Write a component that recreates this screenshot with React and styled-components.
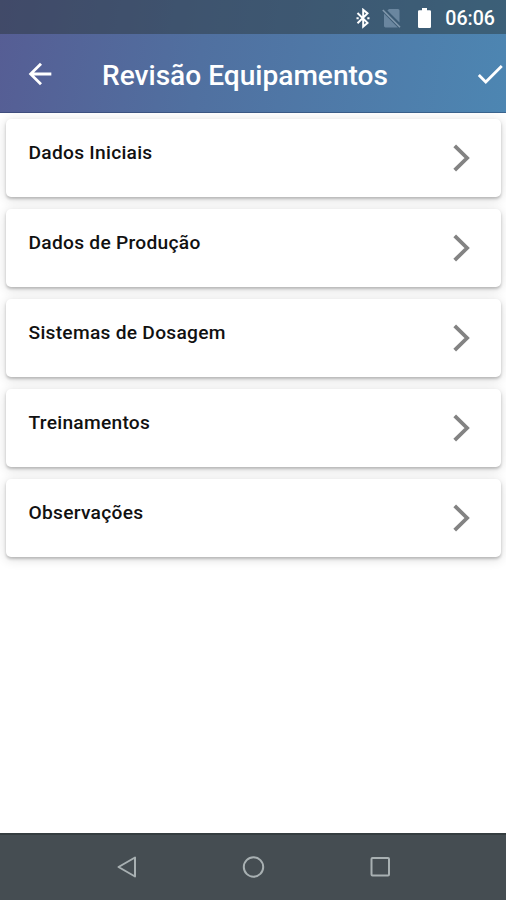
import styled, { createGlobalStyle } from "styled-components";

const GlobalStyle = createGlobalStyle`
  body {
    margin: 0;
    background: #fff;
    font-family: Roboto, "Liberation Sans", sans-serif;
  }
`;
const Screen = styled.div`
  display: flex;
  flex-direction: column;
  height: 900px;
  overflow: hidden;
`;
const Header = styled.header`
  background: linear-gradient(100deg, #565d94 0%, #5070a0 40%, #4d86b2 100%);
`;
const StatusBar = styled.div`
  box-sizing: border-box;
  display: flex;
  justify-content: flex-end;
  align-items: center;
  height: 34px;
  padding: 2px 11px 0 0;
  background: rgba(40, 50, 50, 0.45);
`;
const Clock = styled.span`
  margin: 2px 0 0 14px;
  font-size: 19.6px;
  font-weight: 500;
  line-height: 30px;
  color: #fff;
`;
const StatusIcon = styled.svg`
  display: block;
  width: ${(props) => props.$width}px;
  height: 21px;
  margin-left: ${(props) => props.$gap || 0}px;
`;
const AppBar = styled.div`
  box-sizing: border-box;
  display: flex;
  align-items: center;
  height: 79px;
  padding: 1px 0 0 23px;
  border-bottom: 1px solid rgba(30, 50, 90, 0.4);
`;
const Title = styled.h1`
  flex: 1;
  margin: 4px 0 0 45px;
  font-size: 28.1px;
  font-weight: 500;
  line-height: 34px;
  white-space: nowrap;
  color: #fff;
`;
const Action = styled.svg`
  display: block;
  flex: none;
  width: 34px;
  height: 34px;
  margin-right: ${(props) => props.$end || 0}px;
  fill: #fff;
`;
const List = styled.main`
  flex: 1;
  display: flex;
  flex-direction: column;
  gap: 12px;
  padding: 6px 5px 0 6px;
`;
const Card = styled.div`
  box-sizing: border-box;
  display: flex;
  justify-content: space-between;
  height: 78px;
  padding: 0 13px 0 22.5px;
  border-radius: 5px;
  background: #fff;
  box-shadow: 0 2px 3px rgba(0, 0, 0, 0.22), 0 2px 11px 1px rgba(0, 0, 0, 0.12);
`;
const Label = styled.span`
  margin-top: 22px;
  font-size: 19.2px;
  font-weight: 500;
  letter-spacing: 0.27px;
  line-height: 24px;
  color: #111;
`;
const Chevron = styled.svg`
  display: block;
  width: 54px;
  height: 54px;
  margin-top: 12px;
  fill: none;
  stroke: #838383;
  stroke-width: 1.7;
`;
const NavBar = styled.nav`
  box-sizing: border-box;
  display: flex;
  justify-content: center;
  gap: 102.5px;
  height: 67px;
  padding-top: 20px;
  border-top: 2px solid #353d40;
  background: #454d52;
`;
const NavIcon = styled.svg`
  display: block;
  width: 24px;
  height: 24px;
  fill: none;
  stroke: #a8b0b2;
  stroke-width: 2;
  stroke-linejoin: round;
`;

const items = [
  "Dados Iniciais",
  "Dados de Produção",
  "Sistemas de Dosagem",
  "Treinamentos",
  "Observações",
];

const App = () => {
  return (
    <>
      <GlobalStyle />
      <Screen>
        <Header>
          <StatusBar>
            <StatusIcon $width={14} viewBox="0 0 14 21">
              <path
                d="M1.5 5L11.5 14.9L7.2 18.5V1.8L11.5 5.4L1.5 15.3"
                fill="none"
                stroke="#fff"
                strokeWidth="2"
              />
              <path d="M0.5 10.2h2.2M11.3 10.2h2.2" stroke="#fff" strokeWidth="2" />
            </StatusIcon>
            <StatusIcon $width={20} $gap={12} viewBox="0 0 20 21">
              <path
                d="M7 1h9a1.5 1.5 0 0 1 1.5 1.5V14.6L5.4 2.6zM2 5.4L15.8 19.4H3.5A1.5 1.5 0 0 1 2 18z"
                fill="#6a869f"
              />
              <path d="M0.8 2L18 19.3" stroke="#8299ad" strokeWidth="1.6" />
            </StatusIcon>
            <StatusIcon $width={13} $gap={16} viewBox="0 0 13 21">
              <path
                d="M4 0h5v2.2h2.8A1.2 1.2 0 0 1 13 3.4v15.4a1.2 1.2 0 0 1-1.2 1.2H1.2A1.2 1.2 0 0 1 0 18.8V3.4a1.2 1.2 0 0 1 1.2-1.2H4z"
                fill="#fff"
              />
            </StatusIcon>
            <Clock>06:06</Clock>
          </StatusBar>
          <AppBar>
            <Action viewBox="0 0 24 24">
              <path d="M20 11H7.83l5.59-5.59L12 4l-8 8 8 8 1.41-1.41L7.83 13H20v-2z" />
            </Action>
            <Title>Revisão Equipamentos</Title>
            <Action $end={-1} viewBox="0 0 24 24">
              <path d="M9 16.17L4.83 12l-1.42 1.41L9 19 21 7l-1.41-1.41z" />
            </Action>
          </AppBar>
        </Header>
        <List>
          {items.map((item) => (
            <Card key={item}>
              <Label>{item}</Label>
              <Chevron viewBox="0 0 24 24">
                <path d="M9.2 6.6L14.7 12L9.2 17.4" />
              </Chevron>
            </Card>
          ))}
        </List>
        <NavBar>
          <NavIcon viewBox="0 0 24 24">
            <path d="M20 2.5V21.5L3.5 12z" />
          </NavIcon>
          <NavIcon viewBox="0 0 24 24">
            <circle cx="12.5" cy="12" r="9.7" />
          </NavIcon>
          <NavIcon viewBox="0 0 24 24">
            <rect x="3.5" y="3" width="17.5" height="17.5" rx="1" />
          </NavIcon>
        </NavBar>
      </Screen>
    </>
  );
};

export default App;
